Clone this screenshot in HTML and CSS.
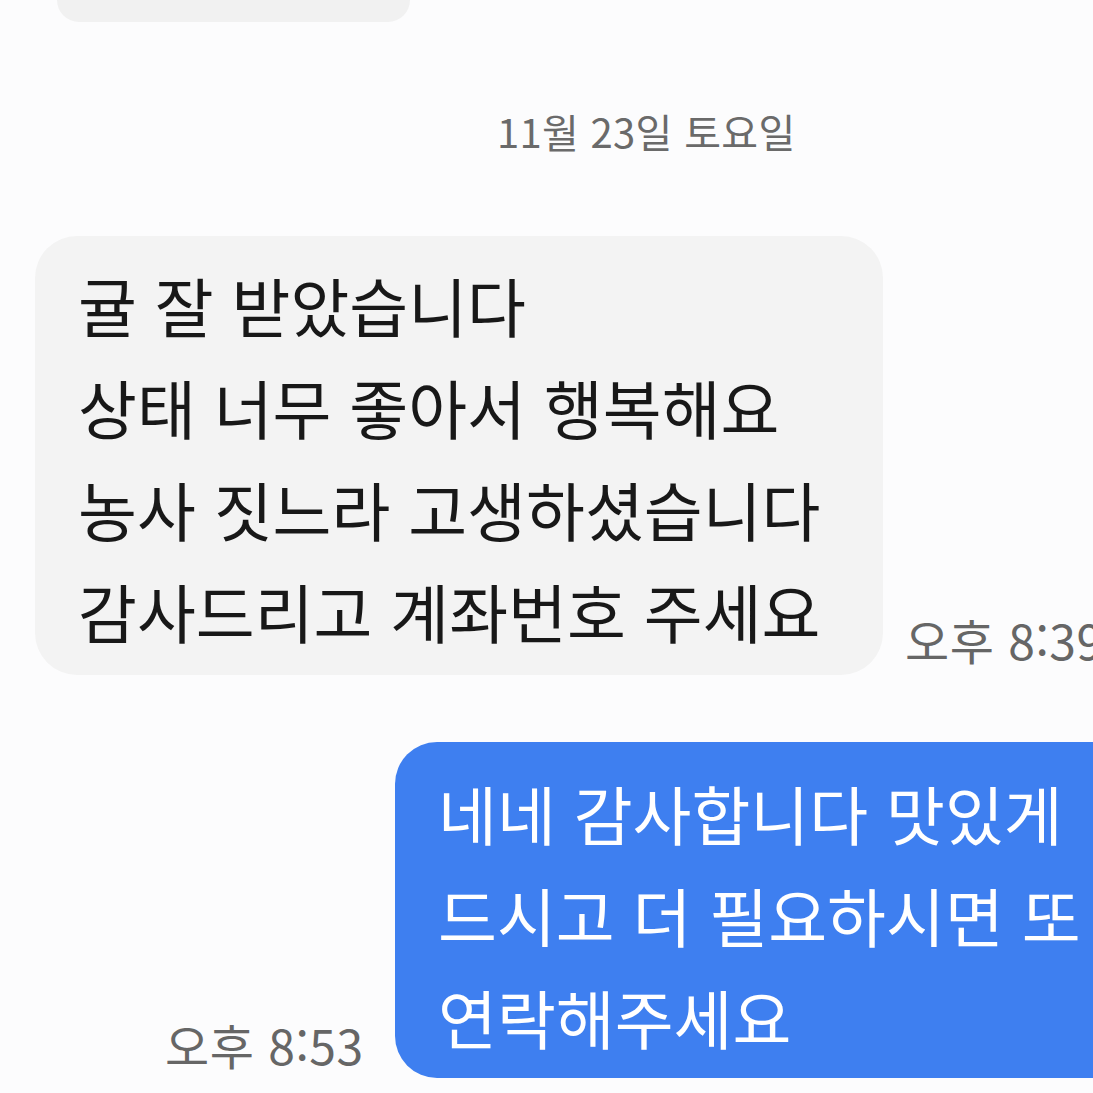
FILE: index.html
```html
<!DOCTYPE html>
<html lang="ko">
<head>
    <meta charset="UTF-8">
    <meta name="viewport" content="width=device-width, initial-scale=1.0">
    <title>대화</title>
    <link rel="stylesheet" href="styles.css">
</head>
<body>
    <div class="chat">
        <div class="prev-bubble"></div>

        <div class="date">11월 23일 토요일</div>

        <div class="row row-in">
            <div class="bubble bubble-in">
                귤 잘 받았습니다<br>
                상태 너무 좋아서 행복해요<br>
                농사 짓느라 고생하셨습니다<br>
                감사드리고 계좌번호 주세요
            </div>
            <span class="time time-in">오후 8:39</span>
        </div>

        <div class="row row-out">
            <span class="time time-out">오후 8:53</span>
            <div class="bubble bubble-out">
                네네 감사합니다 맛있게<br>
                드시고 더 필요하시면 또<br>
                연락해주세요
            </div>
        </div>
    </div>
</body>
</html>
```

FILE: styles.css
```css
body {
    margin: 0;
    padding: 0;
    background: #fcfcfd;
    font-family: "Noto Sans CJK KR", "Noto Sans", sans-serif;
    overflow: hidden;
}
.chat {
    width: 1093px;
    height: 1093px;
    overflow: hidden;
}
.prev-bubble {
    width: 353px;
    height: 22px;
    margin-left: 57px;
    background: #f1f1f1;
    border-radius: 0 0 24px 24px;
}
.date {
    margin: 83px 0 0 497px;
    font-size: 40px;
    line-height: 52px;
    color: #6a6a6a;
    letter-spacing: 0.3px;
}
.row {
    display: flex;
    align-items: flex-end;
}
.row-in {
    margin-top: 79px;
    padding-left: 35px;
}
.row-out {
    margin-top: 67px;
    padding-left: 165px;
}
.bubble {
    font-size: 64px;
    line-height: 102px;
    border-radius: 42px;
    white-space: nowrap;
}
.bubble-in {
    flex: none;
    width: 805px;
    padding: 17px 0 14px 43px;
    background: #f3f3f3;
    color: #181818;
}
.bubble-out {
    flex: none;
    width: 720px;
    padding: 19px 0 11px 43px;
    background: #3e7ff0;
    color: #ffffff;
}
.time {
    font-size: 48px;
    line-height: 60px;
    color: #666666;
    white-space: nowrap;
    letter-spacing: 0.5px;
}
.time-in {
    margin: 0 0 6px 22px;
}
.time-out {
    flex: none;
    width: 230px;
    margin-bottom: 4px;
}
```
